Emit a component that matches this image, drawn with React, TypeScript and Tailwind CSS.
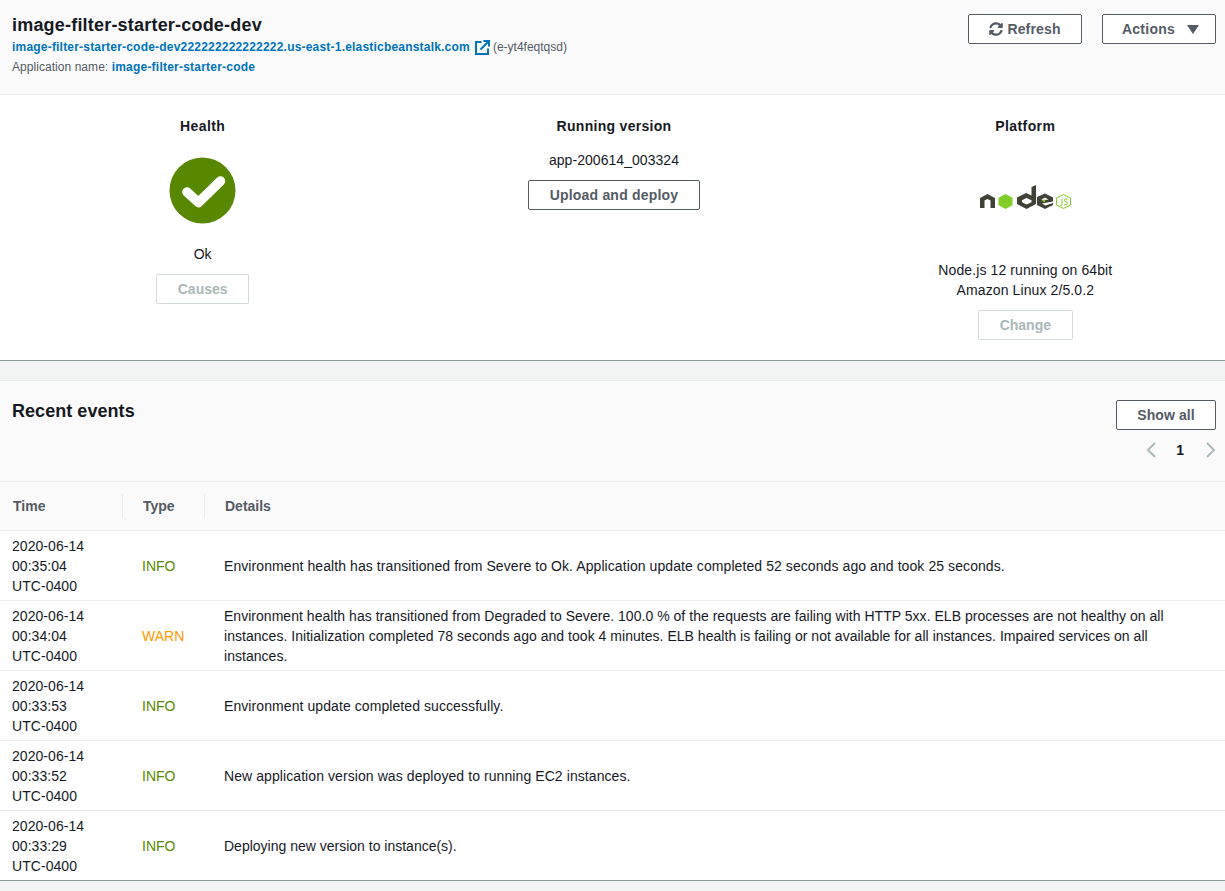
import { FaSyncAlt } from "react-icons/fa";

const events = [
  { d: "00:35:04", t: "INFO", k: "tracking-[0.08px]", m: "Environment health has transitioned from Severe to Ok. Application update completed 52 seconds ago and took 25 seconds." },
  { d: "00:34:04", t: "WARN", k: "tracking-[0.03px]", m: "Environment health has transitioned from Degraded to Severe. 100.0 % of the requests are failing with HTTP 5xx. ELB processes are not healthy on all instances. Initialization completed 78 seconds ago and took 4 minutes. ELB health is failing or not available for all instances. Impaired services on all instances." },
  { d: "00:33:53", t: "INFO", k: "tracking-[0.08px]", m: "Environment update completed successfully." },
  { d: "00:33:52", t: "INFO", k: "tracking-[0.08px]", m: "New application version was deployed to running EC2 instances." },
  { d: "00:33:29", t: "INFO", k: "tracking-[0px]", m: "Deploying new version to instance(s)." },
];

function NodeLogo() {
  return (
    <svg width="93" height="25" viewBox="0 0 93 25">
      <path d="M1 13L8.500 9L16 13V23H11.500V15.500L8.500 14L5.500 15.500V23H1Z" fill="#404137" />
      <path d="M26.500 9L33.500 12.750V20.250L26.500 24L19.500 20.250V12.750Z" fill="#83cd29" />
      <path d="M38 12.500L47 8L52.500 10.500V2L57 0V19L47.500 24L38 19ZM47.500 13L43 15.200V17.300L47.500 19.500L52.500 17.300V15.200Z" fill="#404137" fillRule="evenodd" />
      <path d="M58 12L66 8.500L74 12.500V16.500L63 18.500L66.500 20.500L74 18V20L66 24L58 20ZM66 12.500L62.800 14.200V15.500L69.500 14.500Z" fill="#404137" fillRule="evenodd" />
      <circle cx="65" cy="15.700" r="1.300" fill="#83cd29" />
      <path d="M84.500 9.500L91.500 13V20L84.500 23.500L77.500 20V13Z" fill="none" stroke="#83cd29" strokeWidth="1" />
      <path d="M83 13.500V19.500C83 20.800 81.200 20.800 80.700 19.800M88.500 14.800C87.500 13.500 85.200 13.800 85.400 15.200C85.600 16.800 88.500 16.300 88.500 18.300C88.500 20 85.800 20.200 85 18.800" fill="none" stroke="#83cd29" strokeWidth="1" />
    </svg>
  );
}

export default function App() {
  const btn = "h-[30px] flex items-center justify-center border border-[#545b64] rounded-[2px] bg-white text-[#545b64] text-[14px] font-bold";
  const disabled = "h-[30px] flex items-center justify-center border border-[#d5dbdb] rounded-[2px] bg-white text-[#aab7b8] text-[14px] font-bold";
  return (
    <div className="min-h-[891px] bg-[#f2f3f3] text-[#16191f] text-[14px] leading-[20px] font-['Liberation_Sans',Arial,sans-serif]">
      <header className="h-[95px] bg-[#fafafa] border-b border-[#eaeded] flex justify-between pl-3 pr-[9px]">
        <div>
          <h1 className="mt-[15px] text-[18px] leading-[20px] font-bold tracking-[0.2px]">image-filter-starter-code-dev</h1>
          <div className="mt-[2px] flex items-center text-[12px] leading-[20px]">
            <a className="font-bold text-[#0073bb] tracking-[0.2px]">image-filter-starter-code-dev222222222222222.us-east-1.elasticbeanstalk.com</a>
            <svg className="ml-[5px]" width="15" height="15" viewBox="0 0 15 15" fill="none" stroke="#0073bb" strokeWidth="2">
              <path d="M6.500 2H1V14H13V8.500" />
              <path d="M5.500 9.500L13 2M8.500 1H14V6.500" />
            </svg>
            <span className="ml-[3px] text-[#545b64]">(e-yt4feqtqsd)</span>
          </div>
          <div className="mt-[1px] text-[12px] leading-[18px] text-[#545b64] tracking-[0.05px]">
            Application name: <a className="font-bold text-[#0073bb] tracking-[0.22px]">image-filter-starter-code</a>
          </div>
        </div>
        <div className="mt-[14px] flex gap-5">
          <button className={`${btn} w-[114px] gap-1 tracking-[0.15px]`}>
            <FaSyncAlt size={14} />
            Refresh
          </button>
          <button className={`${btn} w-[114px] gap-[12px] pl-[3px] tracking-[0.25px]`}>
            Actions
            <svg width="12" height="9" viewBox="0 0 12 9"><path d="M0 0H12L6 9Z" fill="#545b64" /></svg>
          </button>
        </div>
      </header>

      <section className="h-[266px] bg-white border-b border-[#879596] grid grid-cols-3 gap-5 pl-[7px] pr-[4px] text-center">
        <div className="flex flex-col items-center">
          <h2 className="mt-[21px] font-bold tracking-[0.4px]">Health</h2>
          <svg className="mt-[21px]" width="67" height="67" viewBox="0 0 67 67">
            <circle cx="33.500" cy="33.500" r="33" fill="#578800" />
            <path d="M18 35L29.500 45.500L51.500 24" fill="none" stroke="#fff" strokeWidth="9.500" strokeLinecap="round" strokeLinejoin="round" />
          </svg>
          <div className="mt-[20px]">Ok</div>
          <button className={`${disabled} mt-[10px] w-[93px]`}>Causes</button>
        </div>
        <div className="flex flex-col items-center">
          <h2 className="mt-[21px] font-bold tracking-[0.3px]">Running version</h2>
          <div className="mt-[14px] tracking-[0.05px]">app-200614_003324</div>
          <button className={`${btn} mt-[10px] w-[172px] tracking-[0.2px]`}>Upload and deploy</button>
        </div>
        <div className="flex flex-col items-center">
          <h2 className="mt-[21px] font-bold tracking-[0.4px]">Platform</h2>
          <div className="mt-[49px] h-[25px]"><NodeLogo /></div>
          <div className="mt-[50px] tracking-[0.1px]">Node.js 12 running on 64bit</div>
          <div className="tracking-[0.1px]">Amazon Linux 2/5.0.2</div>
          <button className={`${disabled} mt-[10px] w-[95px]`}>Change</button>
        </div>
      </section>

      <div className="h-[19px]" />

      <section className="border-t border-[#eaeded] border-b border-b-[#879596] bg-white">
        <div className="h-[100px] bg-[#fafafa] flex justify-between pl-3 pr-[9px]">
          <h2 className="mt-[19px] text-[18px] leading-[22px] font-bold tracking-[0.05px]">Recent events</h2>
          <div className="mt-[19px] flex flex-col items-end">
            <button className={`${btn} w-[100px] tracking-[0.1px]`}>Show all</button>
            <div className="mt-[10px] flex items-center text-[#16191f]">
              <svg width="10" height="16" viewBox="0 0 10 16"><path d="M9 1L2 8L9 15" fill="none" stroke="#aab7b8" strokeWidth="1.800" /></svg>
              <span className="ml-[20px] mr-[22px] text-[14px] font-bold leading-[20px]">1</span>
              <svg width="10" height="16" viewBox="0 0 10 16"><path d="M1 1L8 8L1 15" fill="none" stroke="#aab7b8" strokeWidth="1.800" /></svg>
            </div>
          </div>
        </div>
        <div className="h-[50px] bg-[#fafafa] border-y border-[#eaeded] flex items-center text-[#545b64] font-bold">
          <div className="w-[123px] h-6 pl-[13px] border-r border-[#eaeded] flex items-center">Time</div>
          <div className="w-[82px] h-6 pl-[20px] border-r border-[#eaeded] flex items-center">Type</div>
          <div className="pl-[20px]">Details</div>
        </div>
        {events.map((e, i) => (
          <div key={i} className={`flex items-center ${i ? "h-[70px] border-t border-[#eaeded]" : "h-[69px]"}`}>
            <div className="w-[142px] shrink-0 pl-3 tracking-[0.05px]">
              <div>2020-06-14</div>
              <div>{e.d}</div>
              <div>UTC-0400</div>
            </div>
            <div className={`w-[82px] shrink-0 ${e.t === "WARN" ? "text-[#ff9900]" : "text-[#578800]"}`}>{e.t}</div>
            <div className={`flex-1 pr-[50px] ${e.k}`}>{e.m}</div>
          </div>
        ))}
      </section>
    </div>
  );
}
